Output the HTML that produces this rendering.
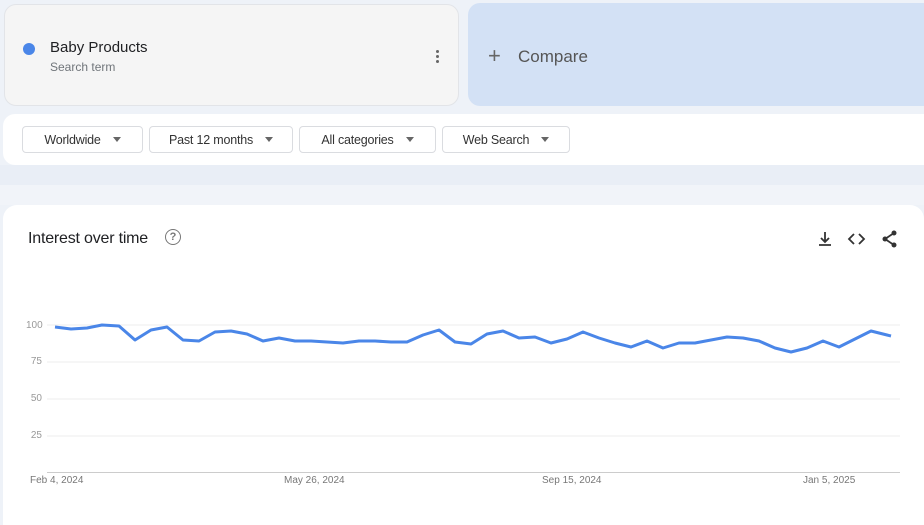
<!DOCTYPE html>
<html><head><style>
body{margin:0;width:924px;height:513px;overflow:hidden;background:#eef2f8;font-family:"Liberation Sans",sans-serif;position:relative}
.abs{position:absolute}
.term{left:4px;top:4px;width:455px;height:102px;background:#f5f5f5;border:1px solid #e2e4e8;border-radius:12px;box-sizing:border-box}
.cmp{left:468px;top:3px;width:456px;height:103px;background:#d3e1f5;border-radius:12px 0 0 12px}
.filters{left:3px;top:114px;width:921px;height:51px;background:#fff;border-radius:12px 0 0 12px}
.btn{position:absolute;top:12px;height:27px;border:1px solid #dadce0;border-radius:4px;box-sizing:border-box;font-size:12.5px;color:#333;line-height:27px;text-align:center;letter-spacing:-0.2px}
.btn:after{content:"";display:inline-block;margin-left:12px;border-left:4px solid transparent;border-right:4px solid transparent;border-top:5px solid #666;vertical-align:2px}
.card{left:3px;top:205px;width:921px;height:320px;background:#fff;border-radius:14px 14px 0 0}
.yl{position:absolute;left:30px;font-size:10px;color:#999;width:12px;text-align:right}
.xl{position:absolute;top:475px;font-size:10px;color:#777}
</style></head><body>
<div class="abs" style="left:0;top:165px;width:924px;height:20px;background:#e9eef6"></div>
<div class="abs" style="left:0;top:185px;width:924px;height:20px;background:#f1f4f9"></div>
<div class="abs term">
<div class="abs" style="left:18px;top:38px;width:12px;height:12px;border-radius:50%;background:#4a86e8"></div>
<div class="abs" style="left:45px;top:34px;font-size:15px;color:#202124">Baby Products</div>
<div class="abs" style="left:45px;top:55px;font-size:12px;color:#70757a">Search term</div>
<div class="abs" style="left:431px;top:45px;width:3px;height:3px;background:#666;border-radius:50%;box-shadow:0 5px 0 #666,0 10px 0 #666"></div>
</div>
<div class="abs cmp">
<div class="abs" style="left:20px;top:41px;font-size:22px;color:#666;line-height:24px">+</div>
<div class="abs" style="left:50px;top:44px;font-size:17px;color:#555">Compare</div>
</div>
<div class="abs filters">
<div class="btn" style="left:19px;width:121px">Worldwide</div>
<div class="btn" style="left:146px;width:144px">Past 12 months</div>
<div class="btn" style="left:296px;width:137px">All categories</div>
<div class="btn" style="left:439px;width:128px">Web Search</div>
</div>
<div class="abs card"></div>
<div class="abs" style="left:28px;top:230px;font-size:16px;color:#202124;letter-spacing:-0.2px">Interest over time</div>
<div class="abs" style="left:165px;top:229px;width:14px;height:14px;border:1.5px solid #777;border-radius:50%;font-size:11px;color:#777;text-align:center;line-height:14px;font-weight:bold">?</div>
<svg class="abs" style="left:812px;top:228px" width="90" height="22" viewBox="0 0 90 22">
<g fill="none" stroke="#333" stroke-width="1.8">
<path d="M13 4v10M9 10l4 4 4-4M7 17h12"/>
<path d="M42 6l-5 5 5 5M47 6l5 5-5 5"/>
<path d="M82 5l-9 6 9 6"/>
</g>
<g fill="#333"><circle cx="82" cy="5" r="2.5"/><circle cx="73" cy="11" r="2.5"/><circle cx="82" cy="17" r="2.5"/></g>
</svg>
<svg class="abs" style="left:0;top:0" width="924" height="513">
<g stroke="#ececec" stroke-width="1"><line x1="47" y1="325" x2="900" y2="325"/><line x1="47" y1="362" x2="900" y2="362"/><line x1="47" y1="399" x2="900" y2="399"/><line x1="47" y1="436" x2="900" y2="436"/></g>
<line x1="47" y1="472.5" x2="900" y2="472.5" stroke="#ccc"/>
<polyline fill="none" stroke="#4a86e8" stroke-width="3" stroke-linejoin="round" points="55,327 71,329 87,328 102,325 119,326 135,340 151,330 167,327 183,340 199,341 215,332 231,331 247,334 263,341 279,338 295,341 311,341 327,342 343,343 359,341 375,341 391,342 407,342 423,335 439,330 455,342 471,344 487,334 503,331 519,338 535,337 551,343 567,339 583,332 599,338 615,343 631,347 647,341 663,348 679,343 695,343 711,340 727,337 743,338 759,341 775,348 791,352 807,348 823,341 839,347 855,339 871,331 887,335 891,336"/>
</svg>
<div class="yl" style="top:320px;left:26px;width:16px">100</div>
<div class="yl" style="top:356px">75</div>
<div class="yl" style="top:393px">50</div>
<div class="yl" style="top:430px">25</div>
<div class="xl" style="left:30px">Feb 4, 2024</div>
<div class="xl" style="left:284px">May 26, 2024</div>
<div class="xl" style="left:542px">Sep 15, 2024</div>
<div class="xl" style="left:803px">Jan 5, 2025</div>
</body></html>
